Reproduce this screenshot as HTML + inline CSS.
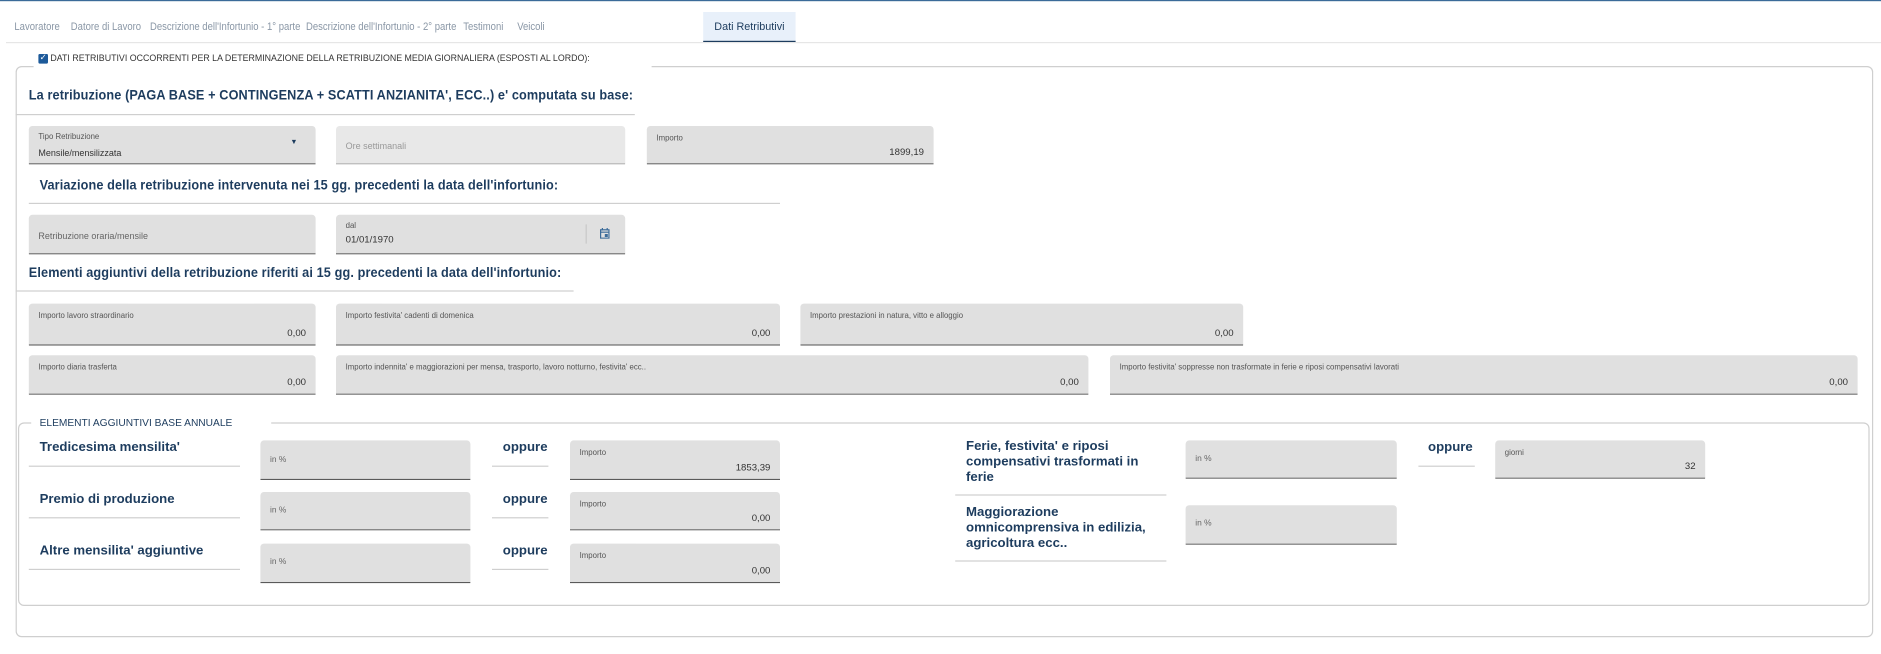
<!DOCTYPE html>
<html><head><meta charset="utf-8"><style>
html,body{margin:0;padding:0;background:#fff;width:1881px;height:654px;overflow:hidden}
#w{position:absolute;left:0;top:0;width:1568px;height:545px;transform:scale(1.2);transform-origin:0 0;font-family:"Liberation Sans",sans-serif;color:#222}
.a{position:absolute}
.tab{position:absolute;top:10px;height:24px;line-height:24px;font-size:9px;color:#8a97a6;white-space:nowrap}
.tab span{display:inline-block;transform:scaleX(0.88);transform-origin:0 0}
.f{position:absolute;background:#e0e0e0;border-bottom:1px solid #5a5a5a;border-radius:3px 3px 0 0;box-sizing:border-box}
.f .l{position:absolute;left:8px;top:7px;font-size:6.5px;color:#555}
.f .v{position:absolute;right:8px;bottom:5px;font-size:8px;color:#333}
.f .m{position:absolute;left:8px;font-size:7.5px;color:#666}
.h{position:absolute;font-size:11.5px;color:#1d3c5e;font-weight:bold;white-space:nowrap;letter-spacing:0.1px;transform:scaleX(0.92);transform-origin:0 0}
.ln{position:absolute;height:1px;background:#cfcfcf}
.lb{position:absolute;font-size:11px;color:#1d3c5e;font-weight:bold;line-height:13px}
</style></head><body><div id="w">
<div class="a" style="left:0;top:0;width:1568px;height:1px;background:#3b6b99"></div>
<div class="tab" style="left:12px"><span>Lavoratore</span></div>
<div class="tab" style="left:59px"><span>Datore di Lavoro</span></div>
<div class="tab" style="left:125px"><span>Descrizione dell'Infortunio - 1° parte</span></div>
<div class="tab" style="left:255px"><span>Descrizione dell'Infortunio - 2° parte</span></div>
<div class="tab" style="left:386px"><span>Testimoni</span></div>
<div class="tab" style="left:431px"><span>Veicoli</span></div>
<div class="tab" style="left:586px;width:77px;text-align:center;background:#e8f0fa;color:#1d3c5e;border-bottom:1px solid #1d3c5e;box-sizing:border-box;height:25px">Dati Retributivi</div>
<div class="ln" style="left:5px;top:35px;width:1563px;background:#e6e6e6"></div>

<div class="a" style="left:13px;top:55px;width:1548px;height:476px;border:1px solid #cfcfcf;border-radius:5px;box-sizing:border-box"></div>
<div class="a" style="left:28px;top:42px;width:515px;height:16px;background:#fff"></div>
<div class="a" style="left:32px;top:45px;width:8px;height:8px;background:#1d5a9a;border-radius:1px;color:#fff;font-size:7px;line-height:8px;text-align:center">✓</div>
<div class="a" style="left:42px;top:44px;font-size:8px;color:#333;white-space:nowrap;transform:scaleX(0.92);transform-origin:0 0">DATI RETRIBUTIVI OCCORRENTI PER LA DETERMINAZIONE DELLA RETRIBUZIONE MEDIA GIORNALIERA (ESPOSTI AL LORDO):</div>

<div class="h" style="left:24px;top:74px">La retribuzione (PAGA BASE + CONTINGENZA + SCATTI ANZIANITA', ECC..) e' computata su base:</div>
<div class="ln" style="left:13px;top:95px;width:516px"></div>
<div class="f" style="left:24px;top:105px;width:239px;height:32px"><span class="l" style="top:6px">Tipo Retribuzione</span><span class="m" style="top:18px;color:#333">Mensile/mensilizzata</span><span class="a" style="left:218px;top:11px;font-size:6px;color:#1d3c5e">▼</span></div>
<div class="f" style="left:280px;top:105px;width:241px;height:32px;background:#e8e8e8;border-bottom-color:#aaa"><span class="m" style="top:12px;color:#999">Ore settimanali</span></div>
<div class="f" style="left:539px;top:105px;width:239px;height:32px"><span class="l">Importo</span><span class="v">1899,19</span></div>

<div class="h" style="left:33px;top:149px">Variazione della retribuzione intervenuta nei 15 gg. precedenti la data dell'infortunio:</div>
<div class="ln" style="left:24px;top:169px;width:626px"></div>
<div class="f" style="left:24px;top:179px;width:239px;height:33px"><span class="m" style="top:13px">Retribuzione oraria/mensile</span></div>
<div class="f" style="left:280px;top:179px;width:241px;height:33px"><span class="l" style="top:6px">dal</span><span class="m" style="top:16px;color:#333;font-size:8px">01/01/1970</span><span class="a" style="left:208px;top:8px;width:1px;height:16px;background:#c8c8c8"></span>
<svg class="a" style="left:220px;top:11px" width="8" height="9" viewBox="0 0 8 9"><rect x="0.5" y="1.5" width="7" height="7" fill="none" stroke="#3b6b99" stroke-width="1"/><line x1="0.5" y1="3.5" x2="7.5" y2="3.5" stroke="#3b6b99"/><rect x="4" y="5" width="2.5" height="2.5" fill="#3b6b99"/><line x1="2" y1="0" x2="2" y2="2" stroke="#3b6b99"/><line x1="6" y1="0" x2="6" y2="2" stroke="#3b6b99"/></svg></div>

<div class="h" style="left:24px;top:222px">Elementi aggiuntivi della retribuzione riferiti ai 15 gg. precedenti la data dell'infortunio:</div>
<div class="ln" style="left:13px;top:242px;width:465px"></div>
<div class="f" style="left:24px;top:253px;width:239px;height:35px"><span class="l">Importo lavoro straordinario</span><span class="v">0,00</span></div>
<div class="f" style="left:280px;top:253px;width:370px;height:35px"><span class="l">Importo festivita' cadenti di domenica</span><span class="v">0,00</span></div>
<div class="f" style="left:667px;top:253px;width:369px;height:35px"><span class="l">Importo prestazioni in natura, vitto e alloggio</span><span class="v">0,00</span></div>
<div class="f" style="left:24px;top:296px;width:239px;height:33px"><span class="l">Importo diaria trasferta</span><span class="v">0,00</span></div>
<div class="f" style="left:280px;top:296px;width:627px;height:33px"><span class="l">Importo indennita' e maggiorazioni per mensa, trasporto, lavoro notturno, festivita' ecc..</span><span class="v">0,00</span></div>
<div class="f" style="left:925px;top:296px;width:623px;height:33px"><span class="l">Importo festivita' soppresse non trasformate in ferie e riposi compensativi lavorati</span><span class="v">0,00</span></div>

<div class="a" style="left:15px;top:352px;width:1543px;height:153px;border:1px solid #cfcfcf;border-radius:5px;box-sizing:border-box"></div>
<div class="a" style="left:26px;top:346px;width:200px;height:12px;background:#fff"></div>
<div class="a" style="left:33px;top:346px;font-size:8.5px;color:#1d3c5e;line-height:12px;white-space:nowrap">ELEMENTI AGGIUNTIVI BASE ANNUALE</div>

<div class="lb" style="left:33px;top:367px">Tredicesima mensilita'</div>
<div class="ln" style="left:24px;top:388px;width:176px"></div>
<div class="f" style="left:217px;top:367px;width:175px;height:33px"><span class="m" style="top:13px;font-size:7px">in %</span></div>
<div class="lb" style="left:419px;top:367px">oppure</div><div class="ln" style="left:410px;top:388px;width:47px"></div>
<div class="f" style="left:475px;top:367px;width:175px;height:33px"><span class="l">Importo</span><span class="v">1853,39</span></div>

<div class="lb" style="left:33px;top:410px">Premio di produzione</div>
<div class="ln" style="left:24px;top:431px;width:176px"></div>
<div class="f" style="left:217px;top:410px;width:175px;height:32px"><span class="m" style="top:12px;font-size:7px">in %</span></div>
<div class="lb" style="left:419px;top:410px">oppure</div><div class="ln" style="left:410px;top:431px;width:47px"></div>
<div class="f" style="left:475px;top:410px;width:175px;height:32px"><span class="l">Importo</span><span class="v">0,00</span></div>

<div class="lb" style="left:33px;top:453px">Altre mensilita' aggiuntive</div>
<div class="ln" style="left:24px;top:474px;width:176px"></div>
<div class="f" style="left:217px;top:453px;width:175px;height:33px"><span class="m" style="top:12px;font-size:7px">in %</span></div>
<div class="lb" style="left:419px;top:453px">oppure</div><div class="ln" style="left:410px;top:474px;width:47px"></div>
<div class="f" style="left:475px;top:453px;width:175px;height:33px"><span class="l">Importo</span><span class="v">0,00</span></div>

<div class="lb" style="left:805px;top:366px;width:155px">Ferie, festivita' e riposi compensativi trasformati in ferie</div>
<div class="ln" style="left:796px;top:412px;width:176px"></div>
<div class="f" style="left:988px;top:367px;width:176px;height:32px"><span class="m" style="top:12px;font-size:7px">in %</span></div>
<div class="lb" style="left:1190px;top:367px">oppure</div><div class="ln" style="left:1182px;top:388px;width:47px"></div>
<div class="f" style="left:1246px;top:367px;width:175px;height:32px"><span class="l">giorni</span><span class="v">32</span></div>

<div class="lb" style="left:805px;top:421px;width:170px">Maggiorazione omnicomprensiva in edilizia, agricoltura ecc..</div>
<div class="ln" style="left:796px;top:467px;width:176px"></div>
<div class="f" style="left:988px;top:421px;width:176px;height:33px"><span class="m" style="top:12px;font-size:7px">in %</span></div>
</div></body></html>
